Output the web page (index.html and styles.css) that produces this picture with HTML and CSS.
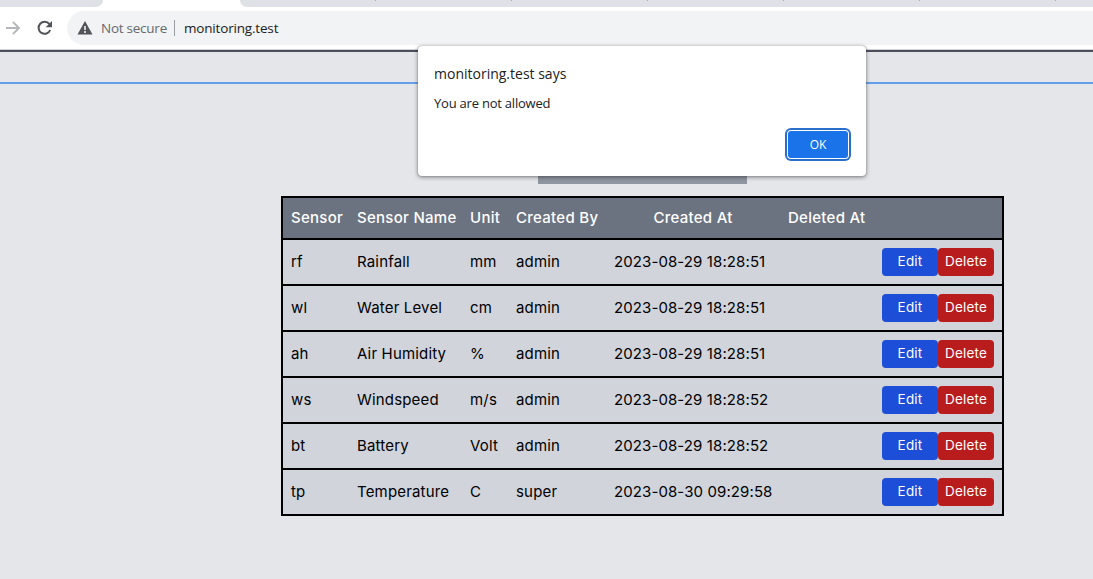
FILE: index.html
```html
<!DOCTYPE html>
<html lang="en">
<head>
<meta charset="utf-8">
<title>monitoring.test</title>
<link rel="stylesheet" href="styles.css">
</head>
<body>
<div class="tabs"><div class="tab-left"></div><div class="tab-active"></div><div class="tab-rest"><i></i><i></i><i></i><i></i><i></i><i></i></div></div>
<div class="toolbar">
  <svg class="forward" width="16" height="16" viewBox="0 0 16 16"><path d="M0 8H13M7 2l6 6-6 6" fill="none" stroke="#b4b6b9" stroke-width="1.8"/></svg>
  <svg class="reload" width="16" height="16" viewBox="0 0 16 16"><path d="M13.2 10A6 6 0 1 1 12.4 4.2" fill="none" stroke="#505357" stroke-width="2"/><path d="M15 1v6.3H8.7z" fill="#505357"/></svg>
  <div class="address">
    <svg class="warn" width="16" height="14" viewBox="0 0 16 14"><path d="M8 0L15.5 13.5H.5z" fill="#505357"/><path d="M8 5v4M8 10v2" stroke="#f1f3f4" stroke-width="1.6"/></svg>
    <span class="insecure">Not secure</span><span class="divider"></span><span class="host">monitoring.test</span>
  </div>
</div>
<nav class="navbar"></nav>
<main class="page">
  <div class="heading"></div>
  <div class="table">
    <div class="row head"><span>Sensor</span><span>Sensor Name</span><span>Unit</span><span>Created By</span><span class="center">Created At</span><span>Deleted At</span><span></span></div>
    <div class="row"><span>rf</span><span>Rainfall</span><span>mm</span><span>admin</span><span class="date">2023-08-29 18:28:51</span><span></span><div class="actions"><button class="edit">Edit</button><button class="delete">Delete</button></div></div>
    <div class="row"><span>wl</span><span>Water Level</span><span>cm</span><span>admin</span><span class="date">2023-08-29 18:28:51</span><span></span><div class="actions"><button class="edit">Edit</button><button class="delete">Delete</button></div></div>
    <div class="row"><span>ah</span><span>Air Humidity</span><span>%</span><span>admin</span><span class="date">2023-08-29 18:28:51</span><span></span><div class="actions"><button class="edit">Edit</button><button class="delete">Delete</button></div></div>
    <div class="row"><span>ws</span><span>Windspeed</span><span>m/s</span><span>admin</span><span class="date">2023-08-29 18:28:52</span><span></span><div class="actions"><button class="edit">Edit</button><button class="delete">Delete</button></div></div>
    <div class="row"><span>bt</span><span>Battery</span><span>Volt</span><span>admin</span><span class="date">2023-08-29 18:28:52</span><span></span><div class="actions"><button class="edit">Edit</button><button class="delete">Delete</button></div></div>
    <div class="row"><span>tp</span><span>Temperature</span><span>C</span><span>super</span><span class="date">2023-08-30 09:29:58</span><span></span><div class="actions"><button class="edit">Edit</button><button class="delete">Delete</button></div></div>
  </div>
</main>
<div class="dialog" role="alertdialog">
  <div class="origin">monitoring.test says</div>
  <div class="message">You are not allowed</div>
  <button class="ok">OK</button>
</div>
</body>
</html>
```
FILE: styles.css
```css
* { box-sizing: border-box; }
body { margin: 0; height: 579px; overflow: hidden; background: #e5e6ea; font-family: Inter, sans-serif; color: #000; }
button { border: 0; padding: 0; font-family: inherit; color: #fff; }
.tabs { display: flex; height: 7px; background: #fff; }
.tab-left { width: 103px; background: #dee1e6; border-bottom-right-radius: 7px; }
.tab-active { width: 137px; }
.tab-rest { flex: 1; display: flex; gap: 135px; padding-left: 135px; background: #dee1e6; border-bottom-left-radius: 7px; }
.tab-rest i { width: 1px; height: 1px; background: #a5a8ad; flex: none; }
.toolbar { display: flex; align-items: center; height: 43px; background: #fff; border-bottom: 1px solid #d0d2d6; padding: 0 0 0 6px; }
.forward { margin-right: 15px; }
.reload { margin-right: 14px; }
.address { flex: 1; display: flex; align-items: center; height: 34px; background: #f1f3f4; border-radius: 17px 0 0 17px; padding-left: 10px; font: 13.5px "Open Sans", sans-serif; }
.warn { margin-right: 8px; }
.insecure { color: #66696e; width: 73px; letter-spacing: -.25px; white-space: nowrap; }
.divider { width: 1px; height: 16px; background: #9a9da1; margin-right: 9px; }
.host { color: #202124; letter-spacing: -.18px; }
.navbar { height: 34px; border-top: 2px solid #4b505b; border-bottom: 2px solid #659eea; }
.page { padding: 92px 0 0 281px; }
.heading { width: 209px; height: 8px; margin: 0 0 12px 257px; background: #9096a1; }
.table { width: 723px; border: 2px solid #000; background: #d1d4db; }
.row { display: grid; grid-template-columns: 66px 113px 46px 98px 174px 94px 128px; align-items: center; height: 46px; border-bottom: 2px solid #000; font-size: 15px; letter-spacing: .17px; white-space: nowrap; }
.row:last-child { height: 44px; border-bottom: 0; }
.row > * { padding: 0 8px; }
.row > span { padding-bottom: 1px; }
.head { height: 42px; background: #6b7280; color: #fff; font-weight: 500; letter-spacing: .28px; }
.date { letter-spacing: .1px; }
.center { text-align: center; }
.actions { display: flex; letter-spacing: 0; }
.actions button { width: 56px; height: 28px; border-radius: 4px; font-size: 13.5px; letter-spacing: .2px; padding-bottom: 2px; }
.edit { background: #1d4ed8; }
.delete { background: #b91c1c; }
.dialog { position: absolute; left: 418px; top: 46px; width: 448px; height: 130px; padding: 18px 16px; background: #fff; border-radius: 4px; box-shadow: 0 0 1px #777, 0 1px 4px rgba(0,0,0,.5); font-family: "Open Sans", sans-serif; color: #202124; display: flex; flex-direction: column; }
.origin { font-size: 14px; line-height: 20px; }
.message { font-size: 13px; line-height: 20px; margin-top: 9px; letter-spacing: -.22px; }
.ok { align-self: flex-end; width: 60px; height: 27px; margin: 18px 2px 0 0; background: #1a73e8; border-radius: 3px; box-shadow: 0 0 0 1px #fff, 0 0 0 3px #2b6fce; font-size: 12px; padding-bottom: 1px; }
```
